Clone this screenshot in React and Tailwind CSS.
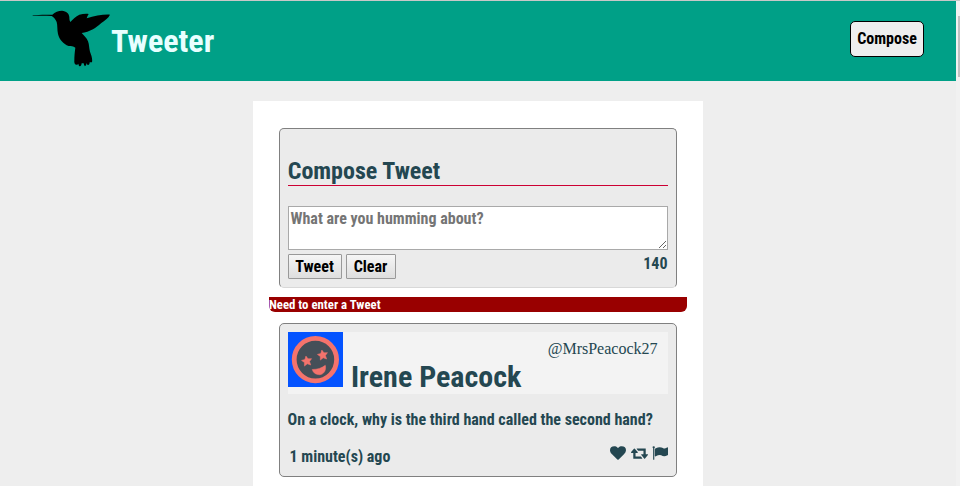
import React from "react";

const ROBOTO = "font-['Roboto_Condensed','Roboto',sans-serif] font-bold [font-stretch:75%]";

function Hummingbird() {
  return (
    <svg className="block h-[57px] w-[80px] shrink-0" viewBox="96 30 240 171" fill="#000">
      <path d="M98 46.5 C112 44 138 44 157 44.5 C165 36 175 32.5 186 32.5 C199 33.5 207 41 208 51 C208 58 209 63 211 66 C219 57 227 49 238 44 C247 42 257 41 266 42 L263 47 L260 55 C283 47 310 43 330 44 C325 54 314 62 304 69 C294 77 288 83 279 88 C268 94 256 98 245 99 C251 106 260 113 264 124 C268 134 267 145 270 155 C274 166 278 176 276 187 L269 187 C269 196 262 199 260 189 L258 196 Q253 203 251 190 L245 190 C244 202 236 201 235 191 L232 194 C226 196 222 191 223 182 C223 169 224 157 226 143 C220 139 213 138 206 138 C190 132 178 119 174 102 C171 89 173 76 170 66 C166 57 161 51 155 48 C137 47 115 47 98 48 Z" />
    </svg>
  );
}

function HeartIcon() {
  return (
    <svg className="size-4" viewBox="0 0 1792 1792" fill="currentColor">
      <path d="M896 1664q-26 0-44-18l-624-602q-10-8-27.5-26t-55.5-65.5-68-97.5-53.5-121-23.5-138q0-220 127-344t351-124q62 0 126.5 21.5t120 58 95.5 68.5 76 68q36-36 76-68t95.5-68.5 120-58 126.5-21.5q224 0 351 124t127 344q0 221-229 450l-623 600q-18 18-44 18z" />
    </svg>
  );
}

function RetweetIcon() {
  return (
    <svg className="h-4 w-[17px]" viewBox="0 0 1920 1792" fill="currentColor">
      <path d="M1280 1504q0 13-9.5 22.5t-22.5 9.5h-960q-8 0-13.5-2t-9-7-5.5-8-3-11.5-1-11.5v-600h-192q-26 0-45-19t-19-45q0-24 15-41l320-384q19-22 49-22t49 22l320 384q15 17 15 41 0 26-19 45t-45 19h-192v384h576q16 0 25 11l160 192q7 10 7 21zm640-416q0 24-15 41l-320 384q-20 23-49 23t-49-23l-320-384q-15-17-15-41 0-26 19-45t45-19h192v-384h-576q-16 0-25-12l-160-192q-7-9-7-20 0-13 9.5-22.5t22.5-9.5h960q8 0 13.5 2t9 7 5.5 8 3 11.5 1 11.5v600h192q26 0 45 19t19 45z" />
    </svg>
  );
}

function FlagIcon() {
  return (
    <svg className="size-4" viewBox="0 0 1792 1792" fill="currentColor">
      <path d="M320 256q0 72-64 110v1266q0 13-9.5 22.5t-22.5 9.5h-64q-13 0-22.5-9.5t-9.5-22.5v-1266q-64-38-64-110 0-53 37.5-90.5t90.5-37.5 90.5 37.5 37.5 90.5zm1472 64v763q0 25-12.5 38.5t-39.5 27.5q-215 116-369 116-61 0-123.5-22t-108.5-48-115.5-48-142.5-22q-192 0-464 146-17 9-33 9-26 0-45-19t-19-45v-742q0-32 31-55 21-14 79-43 236-120 421-120 107 0 200 29t219 88q38 19 88 19 54 0 117.5-21t110-47 88-47 54.5-21q26 0 45 19t19 45z" />
    </svg>
  );
}

function Avatar() {
  const star = "M0 -5 L1.6 -1.9 L5.1 -1.5 L2.6 1 L3.2 4.6 L0 2.9 L-3.2 4.6 L-2.6 1 L-5.1 -1.5 L-1.6 -1.9 Z";
  return (
    <svg className="block size-[55px] shrink-0" viewBox="0 0 55 55">
      <rect width="55" height="55" fill="#0453ff" />
      <circle cx="27.4" cy="27.6" r="21.2" fill="#454f58" stroke="#f4736c" strokeWidth="4.8" />
      <g fill="#f4736c" stroke="#f4736c" strokeWidth="0.5" strokeLinejoin="round">
        <path d={star} transform="translate(18.8 29) rotate(-10)" />
        <path d={star} transform="translate(34.7 23) rotate(-10)" />
        <path d="M24.2 37.5 Q32 37.5 37.3 33.3 C38.5 38 36 42.5 31.5 42.7 C28 42.8 25.2 41 24.2 37.5 Z" />
      </g>
    </svg>
  );
}

function Composer() {
  return (
    <section className="flex h-40 flex-col rounded-[5px] border border-[#808080] border-b-[#d8d8d8] bg-[#ebebeb] px-2">
      <h2 className="mt-7 h-[29px] border-b border-[#cc0033] text-2xl leading-7 -indent-[0.3px]">Compose Tweet</h2>
      <textarea
        className="mt-5 block h-11 w-full shrink-0 resize rounded-none border border-[#a9a9a9] bg-white px-0.5 py-0.5 text-base leading-[19px] -indent-[0.5px] placeholder:text-[#757575]"
        placeholder="What are you humming about?"
      />
      <div className="mt-1 flex items-start gap-1 text-base leading-[19px]">
        <button className="h-[25px] w-[54px] rounded-[1px] border border-[#999] bg-linear-to-b from-[#f6f6f6] to-[#dedede] pr-px text-black">Tweet</button>
        <button className="h-[25px] w-[50px] rounded-[1px] border border-[#999] bg-linear-to-b from-[#f6f6f6] to-[#dedede] pr-px text-black">Clear</button>
        <span className="mr-[0.5px] ml-auto">140</span>
      </div>
    </section>
  );
}

function Tweet() {
  return (
    <article className="mt-[11px] h-[154px] shrink-0 rounded-[5px] border border-[#808080] bg-[#ebebeb] p-2">
      <header className="flex h-[62px] bg-[#f3f3f3]">
        <Avatar />
        <h2 className="mt-[27px] ml-2 text-[30px] leading-9 whitespace-nowrap">Irene Peacock</h2>
        <span className="mt-[7px] mr-[10.5px] ml-auto font-['Liberation_Serif',serif] text-base leading-5 font-normal [font-stretch:100%]">@MrsPeacock27</span>
      </header>
      <p className="mt-4 text-base leading-5 whitespace-nowrap -indent-[0.5px]">On a clock, why is the third hand called the second hand?</p>
      <footer className="mt-4 flex justify-between pl-[1.5px] text-base leading-5">
        <span className="pt-px">1 minute(s) ago</span>
        <div className="-mt-px flex">
          <HeartIcon />
          <div className="ml-[5px]"><RetweetIcon /></div>
          <div className="ml-1"><FlagIcon /></div>
        </div>
      </footer>
    </article>
  );
}

export default function App() {
  return (
    <div className={`flex h-[486px] w-[960px] overflow-hidden border-t border-[#c8c8c8] bg-[#eee] text-[#244751] ${ROBOTO}`}>
      <div className="flex w-[956px] shrink-0 flex-col">
        <nav className="flex h-20 shrink-0 items-start bg-[#00a087] pl-8">
          <div className="mt-[9px]"><Hummingbird /></div>
          <h1 className="mt-[21px] -ml-px text-[32px] leading-[38px] text-[#e8ffff]">Tweeter</h1>
          <button className="mt-5 mr-8 ml-auto h-9 w-[74px] rounded-[5px] border border-black bg-[#eee] text-base text-black">Compose</button>
        </nav>
        <main className="mt-5 ml-[253px] flex h-[400px] w-[450px] flex-col overflow-hidden bg-white px-[26px] pt-[27px]">
          <Composer />
          <div className="-mx-2.5 mt-[9px] h-[15px] shrink-0 rounded-b-md bg-[#990000] text-[12.8px] leading-[15px] text-white">Need to enter a Tweet</div>
          <Tweet />
        </main>
      </div>
      <div className="w-1 bg-[#f1f1f1] pt-[15px] pl-0.5">
        <div className="h-[61px] bg-[#c1c1c1]" />
      </div>
    </div>
  );
}
